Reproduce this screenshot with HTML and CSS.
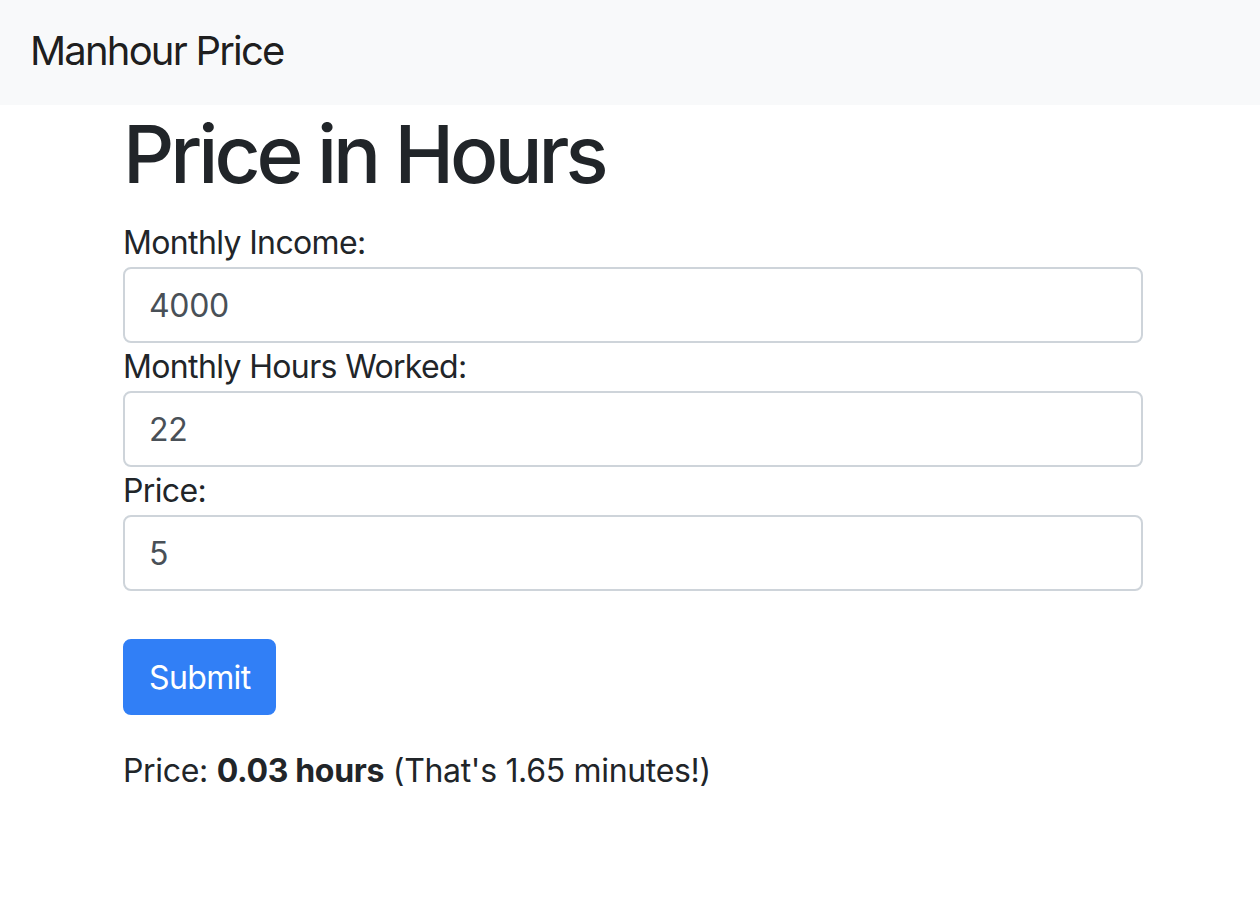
FILE: index.html
```html
<!DOCTYPE html>
<html lang="en">
<head>
<meta charset="utf-8">
<title>Manhour Price</title>
<link rel="stylesheet" href="styles.css">
</head>
<body>
<nav class="navbar">
  <a class="brand" href="#">Manhour Price</a>
</nav>
<main class="container">
  <h1 class="title">Price in Hours</h1>
  <form class="calc">
    <label class="label" for="income">Monthly Income:</label>
    <input class="input" id="income" type="text" value="4000">
    <label class="label" for="hours">Monthly Hours Worked:</label>
    <input class="input" id="hours" type="text" value="22">
    <label class="label" for="price">Price:</label>
    <input class="input" id="price" type="text" value="5">
    <button class="btn" type="button">Submit</button>
  </form>
  <p class="result">Price: <strong>0.03 hours</strong> (That's 1.65 minutes!)</p>
</main>
</body>
</html>
```

FILE: styles.css
```css
html, body {
  margin: 0;
  padding: 0;
  background: #fff;
}
body {
  font-family: Inter, "Noto Sans", "Liberation Sans", sans-serif;
  font-size: 32px;
  line-height: 48px;
  letter-spacing: -0.02em;
  color: #212529;
}
.navbar {
  background: #f8f9fa;
  height: 105px;
  box-sizing: border-box;
  padding: 0 30px 4px;
  display: flex;
  align-items: center;
}
.brand {
  font-size: 40px;
  letter-spacing: -0.045em;
  color: rgba(0, 0, 0, 0.9);
  text-decoration: none;
  line-height: 60px;
}
.container {
  width: 1020px;
  margin: 0 0 0 calc(50% - 507px);
}
.title {
  margin: 1px 0 17px;
  font-size: 80px;
  line-height: 96px;
  font-weight: 500;
  letter-spacing: -0.05em;
}
.calc {
  display: flex;
  flex-direction: column;
  align-items: flex-start;
}
.label {
  display: block;
}
.input {
  display: block;
  width: 100%;
  box-sizing: border-box;
  height: 76px;
  padding: 0 24px;
  font-family: inherit;
  font-size: 32px;
  letter-spacing: -0.01em;
  color: #495057;
  background: #fff;
  border: 2px solid #ced4da;
  border-radius: 8px;
  outline: none;
}
.btn {
  margin-top: 48px;
  height: 76px;
  padding: 0 24px;
  font-family: inherit;
  font-size: 32px;
  letter-spacing: -0.02em;
  color: #fff;
  background: #317ff6;
  border: 2px solid #317ff6;
  border-radius: 8px;
}
.result {
  margin: 32px 0 0;
  letter-spacing: -0.01em;
}
.result strong {
  font-weight: 700;
}
```
